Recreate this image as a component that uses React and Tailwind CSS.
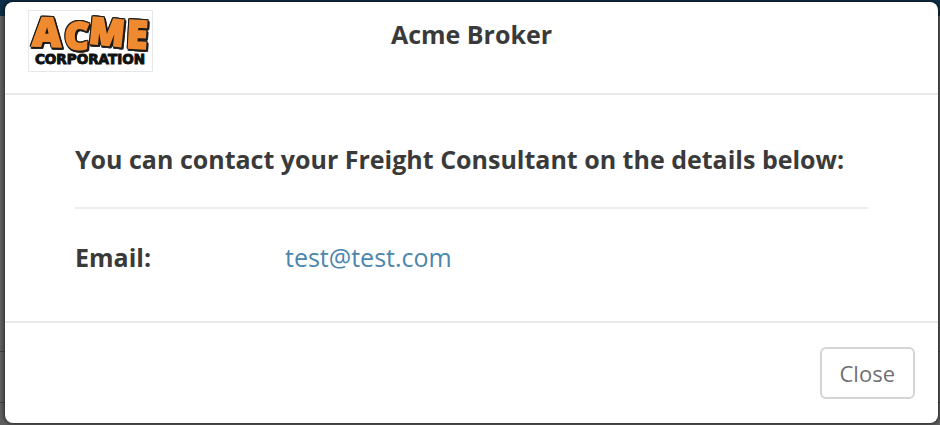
import { useState } from 'react';

function AcmeLogo() {
    return (
        <svg viewBox="0 0 125 62" role="img" aria-label="Acme Corporation" className="w-[125px] h-[62px] overflow-visible border border-gray-200">
            {/* Orange letters with a dark outline that falls to the lower right */}
            <g
                fontFamily="'Open Sans', sans-serif"
                fontWeight="800"
                fill="#f08a30"
                stroke="#f08a30"
                strokeWidth="2"
                className="[filter:drop-shadow(1px_0_0_#1c1a18)_drop-shadow(-1px_0_0_#1c1a18)_drop-shadow(0_-1px_0_#1c1a18)_drop-shadow(1px_2px_0_#1c1a18)]"
            >
                <text x="2" y="36" fontSize="41" rotate="2">A</text>
                <text x="35" y="39" fontSize="39" rotate="2">C</text>
                <text x="60" y="33" fontSize="38" rotate="6">M</text>
                <text x="99" y="38" fontSize="40" rotate="3">E</text>
            </g>
            <text x="62" y="55" textAnchor="middle" fontFamily="'DejaVu Sans', sans-serif" fontWeight="700" fontSize="14" fill="#111" stroke="#111" strokeWidth="1">
                CORPORATION
            </text>
        </svg>
    );
}

// Dimmed page that sits behind the dialog
function Backdrop() {
    return (
        <div className="absolute inset-0 flex flex-col bg-[#606060]" aria-hidden="true">
            <div className="h-4 bg-[#0f3048]" />
            <div className="flex-1" />
            <div className="h-[52px] border-y border-[#444]" />
            <div className="h-[22px]" />
        </div>
    );
}

export default function App() {
    const [open, setOpen] = useState(true);

    return (
        <div className="relative min-h-screen pt-0.5 pr-0.5 pb-px pl-[5px] font-['Open_Sans',sans-serif] text-[#3a3a3a]">
            <Backdrop />

            {open && (
                <div role="dialog" aria-labelledby="dialog-title" className="relative bg-white rounded-lg shadow-[0_0_4px_1px_rgba(0,0,0,0.6)]">
                    {/* Header */}
                    <header className="grid grid-cols-[1fr_auto_1fr] items-start px-[23px] pt-2 pb-[21px] border-b-2 border-[#e8e8e8]">
                        <AcmeLogo />
                        <h1 id="dialog-title" className="text-[25px] leading-12 font-bold">Acme Broker</h1>
                    </header>

                    {/* Contact details */}
                    <main className="px-[70px] pt-[46px] pb-[46px] text-[25px] leading-9">
                        <h2 className="font-bold">You can contact your Freight Consultant on the details below:</h2>
                        <hr className="my-[30px] border-t-2 border-[#eee]" />
                        <dl className="flex">
                            <dt className="w-[210px] font-bold">Email:</dt>
                            <dd>
                                <a href="mailto:test@test.com" className="text-[#4d86ad] hover:underline">test@test.com</a>
                            </dd>
                        </dl>
                    </main>

                    {/* Footer */}
                    <footer className="flex justify-end px-[23px] py-6 border-t-2 border-[#e8e8e8]">
                        <button
                            type="button"
                            onClick={() => setOpen(false)}
                            className="px-[18px] py-2 text-[22px] leading-8 text-[#707070] border-2 border-[#d4d4d4] rounded-md hover:bg-gray-50"
                        >
                            Close
                        </button>
                    </footer>
                </div>
            )}
        </div>
    );
}
